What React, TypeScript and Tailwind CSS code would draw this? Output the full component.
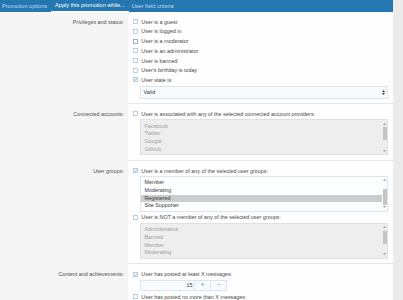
import React from "react";

function Box({ checked, dark }: { checked?: boolean; dark?: boolean }) {
  return (
    <svg className="shrink-0" width="5" height="5" viewBox="0 0 5 5">
      <rect x="0.5" y="0.5" width="4" height="4" fill="#ffffff" stroke={dark ? "#8a9bab" : "#a9c5dc"} strokeWidth="0.8" />
      {checked && <path d="M1.2 2.6 L2.2 3.5 L3.9 1.4" fill="none" stroke="#5b9bd1" strokeWidth="0.7" />}
    </svg>
  );
}

function Row({ text, checked, dark }: { text: string; checked?: boolean; dark?: boolean }) {
  return (
    <div className="h-[9.7px] flex items-center gap-[3.3px]">
      <Box checked={checked} dark={dark} />
      <span className="whitespace-nowrap">{text}</span>
    </div>
  );
}

function Scroll({ thumbTop, thumbH }: { thumbTop: number; thumbH: number }) {
  return (
    <div className="w-[5px] relative shrink-0">
      <svg className="absolute left-[1px] top-[2.5px]" width="3" height="2" viewBox="0 0 6 4">
        <path d="M0 4 L3 0 L6 4 Z" fill="#a0a0a0" />
      </svg>
      <div className="absolute left-[0.8px] w-[3.4px] bg-[#c4c4c4]" style={{ top: thumbTop, height: thumbH }} />
      <svg className="absolute left-[1px] bottom-[2.5px]" width="3" height="2" viewBox="0 0 6 4">
        <path d="M0 0 L3 4 L6 0 Z" fill="#a0a0a0" />
      </svg>
    </div>
  );
}

function ListBox({
  items,
  disabled,
  selected,
  thumbTop,
  thumbH,
}: {
  items: string[];
  disabled?: boolean;
  selected?: string;
  thumbTop: number;
  thumbH: number;
}) {
  return (
    <div
      className={
        "ml-[7px] h-[36px] flex overflow-hidden border border-solid " +
        (disabled ? "bg-[#eeeeee] border-[#e0e0e0] text-[#a0a0a0]" : "bg-[#fdfeff] border-[#dde6ee] text-[#3c3c3c]")
      }
    >
      <div className="flex-1 pt-[2.3px] flex flex-col overflow-hidden">
        {items.map((it) => (
          <div
            key={it}
            className={"h-[7.7px] shrink-0 leading-[7.7px] pl-[3.4px] whitespace-nowrap " + (it === selected ? "bg-[#cdcdcd]" : "")}
          >
            {it}
          </div>
        ))}
      </div>
      <Scroll thumbTop={thumbTop} thumbH={thumbH} />
    </div>
  );
}

function Section({ label, children }: { label: string; children: React.ReactNode }) {
  return (
    <div className="flex">
      <div className="w-[128px] shrink-0 bg-[#f5f5f5] pt-[5px] pr-[4px] text-[#505050]">
        <div className="h-[9.7px] flex items-center justify-end whitespace-nowrap">{label}</div>
      </div>
      <div className="flex-1 bg-[#fefefe] border-b border-solid border-[#e8e8e8] pl-[5px] pr-[4.7px] pt-[5px] pb-[4.5px] text-[#4a4a4a]">
        {children}
      </div>
    </div>
  );
}

export default function App() {
  return (
    <div
      className="w-[403px] h-[300px] overflow-hidden flex bg-[#fefefe] text-[5.4px]"
      style={{ fontFamily: '"Liberation Sans", Arial, sans-serif' }}
    >
      <div className="w-[393px] shrink-0 flex flex-col">
        <div className="h-[12px] bg-[#2577b1] flex items-stretch text-[5.6px] shrink-0">
          <div className="pl-[2px] pr-[4px] flex items-center text-[#c3dbef] whitespace-nowrap">Promotion options</div>
          <div className="px-[4px] flex items-center text-white border-b border-solid border-white whitespace-nowrap">
            Apply this promotion while...
          </div>
          <div className="px-[3px] flex items-center text-[#c3dbef] whitespace-nowrap">User field criteria</div>
        </div>

        <Section label="Privileges and status:">
          <Row text="User is a guest" />
          <Row text="User is logged in" />
          <Row text="User is a moderator" dark />
          <Row text="User is an administrator" />
          <Row text="User is banned" />
          <Row text="User's birthday is today" />
          <Row text="User state is:" checked />
          <div className="ml-[7px] mt-[1px] h-[12.7px] flex items-center justify-between border border-solid border-[#dde6ee] bg-[#f8fbfd] pl-[2.6px] pr-[2px] text-[#333]">
            <span>Valid</span>
            <svg width="3" height="5" viewBox="0 0 6 10">
              <path d="M0 4 L3 0 L6 4 Z M0 6 L3 10 L6 6 Z" fill="#333" />
            </svg>
          </div>
        </Section>

        <Section label="Connected accounts:">
          <Row text="User is associated with any of the selected connected account providers:" />
          <div className="mt-[0.7px]">
            <ListBox disabled items={["Facebook", "Twitter", "Google", "GitHub"]} thumbTop={7} thumbH={13} />
          </div>
        </Section>

        <Section label="User groups:">
          <Row text="User is a member of any of the selected user groups:" checked />
          <div className="mt-[0.3px]">
            <ListBox
              items={["Member", "Moderating", "Registered", "Site Supporter"]}
              selected="Registered"
              thumbTop={12}
              thumbH={16}
            />
          </div>
          <div className="mt-[0.5px]">
            <Row text="User is NOT a member of any of the selected user groups:" />
          </div>
          <div className="mt-[0.8px]">
            <ListBox disabled items={["Administrative", "Banned", "Member", "Moderating"]} thumbTop={7} thumbH={13} />
          </div>
        </Section>

        <Section label="Content and achievements:">
          <Row text="User has posted at least X messages:" checked />
          <div className="ml-[7px] mt-[1px] w-[87px] h-[11px] flex border border-solid border-[#dde6ee] bg-[#f8fbfd] text-[#333]">
            <div className="flex-1 flex items-center justify-end pr-[1.5px]">15</div>
            <div className="w-[16px] border-l border-solid border-[#dde6ee] flex items-center justify-center text-[#5b9bd1] text-[7px]">
              +
            </div>
            <div className="w-[16px] border-l border-solid border-[#dde6ee] flex items-center justify-center text-[#5b9bd1] text-[7px]">
              −
            </div>
          </div>
          <div className="mt-[1px]">
            <Row text="User has posted no more than X messages:" />
          </div>
        </Section>
      </div>
      <div className="w-[10px] shrink-0 bg-[#ebebeb]" />
    </div>
  );
}
